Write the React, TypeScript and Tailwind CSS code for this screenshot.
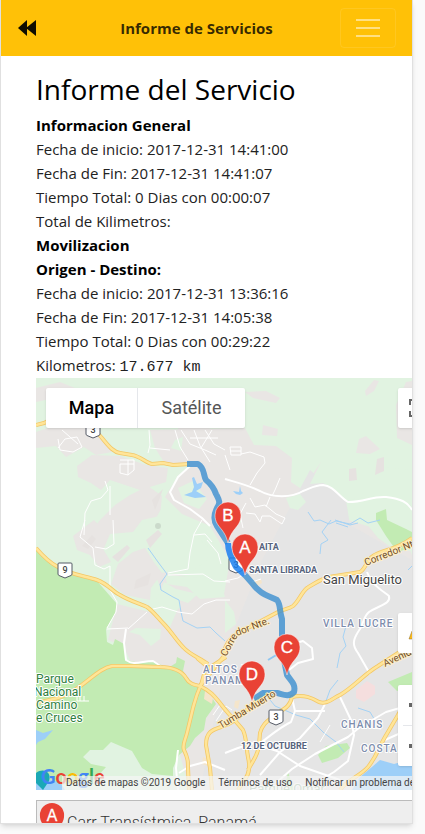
import React from "react";

const general = [
  "Fecha de inicio: 2017-12-31 14:41:00",
  "Fecha de Fin: 2017-12-31 14:41:07",
  "Tiempo Total: 0 Dias con 00:00:07",
  "Total de Kilimetros:",
];

const trip = [
  "Fecha de inicio: 2017-12-31 13:36:16",
  "Fecha de Fin: 2017-12-31 14:05:38",
  "Tiempo Total: 0 Dias con 00:29:22",
];

const stops = [
  { letter: "B", x: 228, y: 543 },
  { letter: "A", x: 245, y: 575 },
  { letter: "D", x: 252, y: 702 },
  { letter: "C", x: 287, y: 675 },
];

const pinShape =
  "M0 0C-1.500 -6 -3 -9 -6 -13C-10 -18 -13 -21 -13 -28A13 13 0 0 1 13 -28C13 -21 10 -18 6 -13C3 -9 1.500 -6 0 0Z";

const highways = [
  "M36 425L44 423L50 420L58 418",
  "M93 428L102 438C110 448 114 452 120 453L132 455C140 456 146 463 152 464L163 463L173 465L190 464",
  "M36 548C42 555 50 563 58 567C68 574 85 576 97 580C108 584 112 591 120 595C130 601 138 603 147 607C153 611 158 618 163 623C171 631 176 640 183 647C190 655 200 658 208 664",
  "M200 686L224 656C224 640 236 634 246 629L276 613C283 609 289 609 293 606C299 601 301 593 307 588C315 583 321 579 329 577L348 574L360 572C366 569 366 560 373 556C382 550 396 550 412 538",
  "M36 703C50 700 64 698 76 689C90 680 100 668 112 666L130 666L160 667C172 667 182 671 186 678C189 684 195 685 200 686",
  "M197 658L209 668L226 657",
  "M206 668C203 676 203 681 200 687C196 696 195 701 193 708L187 733C185 741 182 745 184 750C188 758 188 762 188 768L189 790",
  "M200 686C212 692 215 697 220 703C228 714 237 722 243 730C247 739 246 747 248 757C250 766 250 773 244 781L238 790",
  "M212 790L210 768L206 745C206 732 212 730 221 727C236 722 240 716 253 704L262 696",
  "M248 770C253 760 258 756 259 745L260 733C263 722 270 720 276 714C286 708 290 706 292 697C304 694 312 698 319 702C328 705 334 697 340 695C355 686 363 675 378 666L412 644",
  "M412 689L398 715L385 737C378 749 377 756 368 767C359 777 348 779 340 790",
];

const mainStreets = [
  "M225 479C235 482 248 485 260 491C272 498 292 498 303 491C313 487 316 485 323 485C334 486 338 496 348 502C365 502 372 496 386 497C401 499 408 502 412 510",
  "M190 466L178 477L170 492L174 500L190 509L202 518L210 526",
  "M367 572C371 584 380 589 389 596C391 604 380 605 369 612C362 618 365 623 358 632C353 640 352 645 358 653L370 674",
  "M126 629L124 643L126 660C134 666 142 661 153 661L162 667",
  "M292 698L295 711L291 722C280 727 270 736 258 745",
  "M325 704L318 718L300 738L280 752L260 775",
  "M295 711L325 711",
  "M340 697L351 720L354 735L348 761L334 772L324 778",
  "M400 708L386 712L374 719L360 727L348 737L315 754L292 769L276 783",
  "M262 746L277 751L300 766L340 780",
  "M225 753L238 748L254 743",
  "M179 773L190 766L205 762L225 770",
  "M178 750L176 768L178 790",
  "M385 740L412 728",
  "M289 645L303 641L312 648L313 659L298 663L289 670",
];

const lanes = [
  "M58 439L60 450L73 452L82 447L77 437L65 439L58 448M62 430L78 444",
  "M120 460L134 460L134 470L128 475L120 473L120 464L134 464M128 460V475",
  "M105 481L108 490L101 498L91 501L85 513L84 535M110 486L110 515",
  "M149 430L150 445L148 453M175 430L180 447L188 460M150 448L170 450",
  "M181 430L190 444L205 450L216 455M194 430L200 446L210 462M205 430L214 444L225 450M190 438L218 438M212 430L201 448",
  "M230 447L241 447L241 455L231 455ZM231 451L241 451M241 454L250 452L264 457L265 463L257 473L250 485M225 455L230 470M280 478L275 490L272 496",
  "M246 503L240 514L243 528M250 498L255 507L265 505L276 514L285 518L282 524L270 516L262 516L260 522L255 514L246 513M270 497L266 507",
  "M85 520L80 537L93 548L95 565L104 569L110 566L110 590L117 602L116 612L107 628M113 520L114 544L106 549L95 547",
  "M107 629L128 628M128 629L147 612M153 609L162 607L178 612L192 614L204 604L216 600L230 600",
  "M202 520L194 534L190 553L188 569L168 573M207 540L218 553L221 564M168 575L203 574L214 581L230 582M194 535L205 534L212 542",
  "M225 581L238 578L244 574M213 715L222 702M216 721L226 706L232 710",
  "M252 582L261 579M330 725L320 742M365 727L381 729",
  "M77 697V701H89M80 694V701M84 696V701",
];

const rivers = [
  "M148 548L158 562L167 574L160 584L161 590L173 597L179 600L181 612L183 621L197 628L210 627L216 633L225 641",
  "M331 520L322 532L328 540L321 544L320 554M335 520L350 525L358 523M336 523L348 527",
  "M308 512L314 521L320 520L329 524L336 521L350 524L360 518L368 523L380 520",
  "M346 626L343 637L346 646L340 653L337 668M262 690L275 706L296 715L310 719L324 733L336 742L344 752",
  "M338 680L330 690L326 701M408 570L412 566M358 708L370 712L376 722",
];

const hills = [
  "M36 388L60 382L75 388L90 400L70 409L50 399L36 402Z",
  "M36 432L48 428L60 424L95 428L104 440L112 452L96 455L84 447L66 457L56 446L36 448Z",
  "M77 466L92 455L120 456L146 465L168 468L166 482L140 490L110 480L101 490L91 483L78 477Z",
  "M115 505L130 495L148 486L162 496L160 516L142 520L133 532L110 534L104 548L88 536L100 520Z",
  "M150 430L245 428L254 445L276 446L292 458L291 482L303 490L310 478L321 462L320 484L345 501L348 520L380 530L408 545L412 555L412 790L190 790L178 748L212 710L195 684L150 661L132 664L123 646L108 640L117 604L150 612L170 627L180 604L163 594L155 574L167 572L188 577L214 580L224 594L230 560L210 526L182 514L165 497L178 476L190 466L164 462L155 448Z",
  "M118 564L133 552L145 548L153 561L162 573L151 588L150 600L125 595L111 584Z",
  "M73 536L94 520L108 535L103 549L111 562L99 567L90 555L77 550Z",
  "M245 392L266 391L280 398L276 403L253 398Z",
  "M263 425L278 429L277 436L262 435Z",
  "M365 391L374 380L379 381L374 391L366 396Z",
  "M359 439L366 436L380 449L370 454L356 453Z",
  "M396 405L406 382L412 381L412 445L397 438Z",
  "M177 420L195 412L210 424L208 444L194 455L180 442Z",
];

const groves = [
  "M129 632L136 628L161 629L160 639L151 646L140 635Z",
  "M164 582L176 589L198 594L188 603L179 600L181 608L170 610L155 601L160 592Z",
  "M183 550L197 538L207 545L208 560L192 571L184 568Z",
  "M175 440L183 437L181 451L171 448Z",
  "M178 488L193 481L207 499L199 509L184 503Z",
  "M165 575L220 579L225 597L200 599L187 587L167 584Z",
  "M155 558L183 546L187 569L169 575Z",
  "M225 510L237 506L241 522L229 529Z",
  "M225 600L234 612L236 624L225 633Z",
  "M155 520L166 500L182 516L206 528L196 536L186 552L166 560L150 548Z",
  "M286 498L300 494L306 502L298 510L290 508Z",
];

function MapDrawing() {
  return (
    <svg
      className="block h-full w-full"
      viewBox="36 378 376 412"
      preserveAspectRatio="xMinYMin slice"
      role="img"
      aria-label="Mapa de la ruta"
      fontFamily="Roboto, sans-serif"
    >
      <rect x="36" y="378" width="1200" height="412" fill="#e1f3e1" />
      <g fill="#e9e6e4">
        {hills.map((d) => (
          <path key={d} d={d} />
        ))}
      </g>
      <path d="M310 470L346 500L350 525L412 560V790H200L230 640L262 560Z" fill="#e5e5e5" />
      <path d="M348 503L375 497L398 500L412 512V551L395 550L378 538L366 523L350 519Z" fill="#e1f3e1" />
      <path d="M321 462L345 462L412 470V506L386 494L348 500L336 490L323 483L310 484Z" fill="#e1f3e1" />
      <g fill="#e1f3e1">
        {groves.map((d) => (
          <path key={d} d={d} />
        ))}
      </g>
      <g fill="#e6e2e0">
        <path d="M377 459L384 457L384 471L375 475Z" />
        <path d="M349 469L356 468L357 480L349 481Z" />
        <path d="M152 500L163 489L159 500L155 510Z" />
        <path d="M112 557L127 545L130 548L118 562Z" />
        <path d="M136 580L151 573L148 585L134 589Z" />
        <path d="M82 546L92 535L96 539L88 549Z" />
        <path d="M146 540L158 530L162 534L150 548Z" />
      </g>
      <g fill="#c2ebb3">
        <path d="M36 550L58 568L97 581L117 604L115 614L106 629L107 642L113 645L115 639L124 644L126 660L140 663L153 661L168 668L176 663L177 657L185 661L183 671L192 684L206 688L216 704L206 718L204 730L195 738L190 746L179 755L173 768L173 776L152 774L142 768L132 751L111 742L103 750L90 750L83 757L91 764L106 767L95 779L60 785L36 776Z" />
        <path d="M376 520L376 513L386 509L387 520L406 529L412 532V545L398 553L386 536Z" />
        <path d="M318 755L326 746L347 743L350 748L338 758L322 763Z" />
        <path d="M388 682L412 672V687L397 691Z" />
        <path d="M284 790L288 772L294 790Z" />
      </g>
      <path d="M356 690L367 681L375 686L375 694L364 702L356 698Z" fill="#f5dede" />
      <g fill="#f4e5cb">
        <path d="M205 691L214 692L212 704L204 699Z" />
        <path d="M235 701L240 700L238 709L234 707Z" />
        <path d="M203 757L209 759L208 766L202 764Z" />
        <path d="M250 582L261 579L262 583L254 588Z" />
      </g>
      <g fill="#9dcff8">
        <path d="M192 478L194 477L197 484L203 482L201 488L196 491L206 497L195 498L184 495L192 492L194 487Z" />
        <path d="M233 491L239 492L240 486L241 491L243 493L240 495L236 494Z" />
        <path d="M36 730L43 733L53 730L45 739L38 742L36 745Z" />
        <path d="M352 790L360 777L372 767L380 760L394 764L412 759V790Z" />
        <path d="M36 777L60 782L65 790H36Z" />
      </g>
      <circle cx="158" cy="526" r="3" fill="#cbdacb" />
      <g fill="none" stroke="#a4d2f5" strokeWidth="1">
        {rivers.map((d) => (
          <path key={d} d={d} />
        ))}
      </g>
      <path d="M268 660L278 654" stroke="#8fc6f0" strokeWidth="2" />
      <g fill="none" stroke="#ffffff" strokeLinejoin="round">
        <g strokeWidth="1">
          {lanes.map((d) => (
            <path key={d} d={d} />
          ))}
        </g>
        <g strokeWidth="2">
          {mainStreets.map((d) => (
            <path key={d} d={d} />
          ))}
        </g>
      </g>
      <g fill="none" stroke="#f3c766" strokeWidth="4">
        {highways.map((d) => (
          <path key={d} d={d} />
        ))}
      </g>
      <g fill="none" stroke="#ffe598" strokeWidth="2.500">
        {highways.map((d) => (
          <path key={d} d={d} />
        ))}
      </g>

      <RoadShield x={93} y={430} label="3" />
      <RoadShield x={65} y={570} label="9" />
      <RoadShield x={236} y={565} label="3" />
      <RoadShield x={276} y={717} label="3" />

      <g fill="none" strokeLinejoin="round" strokeWidth="6">
        <path
          d="M187 464L198 464C205 468 203 475 206 480C211 484 214 488 216 494C219 500 221 502 217 508C214 514 213 520 217 526L228 543"
          stroke="#3b8fd0"
          strokeOpacity="0.8"
        />
        <path d="M228 543C228 552 232 559 236 567L245 575" stroke="#1a80f0" strokeOpacity="0.85" />
        <path
          d="M245 575L252 583C260 594 267 595 277 600C281 605 279 610 282 619L282 635L284 660L287 675C291 681 296 684 294 692C289 698 282 694 277 693L263 693L254 699"
          stroke="#3b8fd0"
          strokeOpacity="0.8"
        />
      </g>

      <g stroke="#ffffff" strokeWidth="2" strokeLinejoin="round" paintOrder="stroke">
        <g fill="#56637c" fontSize="9" fontWeight="700">
          <text x="259" y="550">AITA</text>
          <text x="249" y="573">SANTA LIBRADA</text>
          <text x="241" y="749">12 DE OCTUBRE</text>
        </g>
        <g fill="#7c8cac" fontSize="10" fontWeight="500" letterSpacing="1">
          <text x="323" y="627">VILLA LUCRE</text>
          <text x="203" y="673">ALTOS DE</text>
          <text x="205" y="684">PANAMÁ</text>
          <text x="341" y="728">CHANIS</text>
          <text x="361" y="752">COSTA</text>
        </g>
        <text x="323" y="584" fill="#454545" fontSize="13">San Miguelito</text>
        <g fill="#2f8040" fontSize="12">
          <text x="36" y="683">Parque</text>
          <text x="34" y="696">Nacional</text>
          <text x="36" y="709">Camino</text>
          <text x="36" y="722">e Cruces</text>
        </g>
        <text x="249" y="793" fill="#91b391" fontSize="13">Parque Omar</text>
        <g fill="#74502a" fontSize="10" stroke="#ffefc2">
          <text transform="translate(226 657) rotate(-61)">Corre</text>
          <text transform="translate(237 636) rotate(-21)">dor Nte.</text>
          <text transform="translate(366 566) rotate(-22)">Corredor Nte.</text>
          <text transform="translate(385 667) rotate(-25)">Avenida</text>
          <text transform="translate(221 729) rotate(-31)">Tumba</text>
          <text transform="translate(249 712) rotate(-31)">Muerto</text>
        </g>
      </g>

      {stops.map((stop) => (
        <g key={stop.letter} transform={`translate(${stop.x} ${stop.y})`}>
          <path d={pinShape} fill="#e94235" stroke="#ffffff" strokeWidth="0.500" />
          <PinLetter letter={stop.letter} />
        </g>
      ))}

      <path d="M36 773C44 767 52 773 49 781L43 790L36 783Z" fill="#1ba8b5" />
    </svg>
  );
}

function PinLetter({ letter }: { letter: string }) {
  return (
    <text
      y="-22"
      textAnchor="middle"
      fill="#ffffff"
      fontFamily="Liberation Sans, sans-serif"
      fontSize="17"
      stroke="#ffffff"
      strokeWidth="0.300"
    >
      {letter}
    </text>
  );
}

function RoadShield({ x, y, label }: { x: number; y: number; label: string }) {
  return (
    <g transform={`translate(${x} ${y})`}>
      <path
        d="M-6 -7H6Q7 -7 7 -6V4Q7 5 6 5.500L0 8L-6 5.500Q-7 5 -7 4V-6Q-7 -7 -6 -7Z"
        fill="#ffffff"
        stroke="#555b66"
      />
      <text y="3" textAnchor="middle" fontSize="9" fontWeight="500" fill="#444444">
        {label}
      </text>
    </g>
  );
}

function GoogleLogo() {
  return (
    <span
      aria-label="Google"
      className="absolute bottom-0 left-[5px] font-['Lato',sans-serif] text-[20px] leading-7 font-bold"
    >
      <span className="text-[#4285f4]">G</span>
      <span className="text-[#ea4335]">o</span>
      <span className="text-[#fbbc05]">o</span>
      <span className="text-[#4285f4]">g</span>
      <span className="text-[#34a853]">l</span>
      <span className="text-[#ea4335]">e</span>
    </span>
  );
}

function RouteMap() {
  return (
    <div className="relative h-[412px] overflow-hidden font-['Roboto',sans-serif]">
      <MapDrawing />
      <div className="absolute top-[10px] left-[10px] flex h-10 rounded-xs bg-white text-[18px] shadow">
        <button type="button" className="w-[92px] border-r border-gray-200 font-medium text-black">
          Mapa
        </button>
        <button type="button" className="w-[107px] text-[#565656]">
          Satélite
        </button>
      </div>
      <button
        type="button"
        aria-label="Pantalla completa"
        className="absolute top-[10px] left-[362px] flex size-10 items-center justify-center rounded-xs bg-white shadow"
      >
        <svg className="size-[18px]" viewBox="0 0 18 18" fill="none" stroke="#666666" strokeWidth="2">
          <path d="M1 6V1H6M12 1H17V6M17 12V17H12M6 17H1V12" />
        </svg>
      </button>
      <button
        type="button"
        aria-label="Street View"
        className="absolute top-[235px] left-[362px] flex size-10 items-center justify-center rounded-xs bg-white shadow"
      >
        <svg className="h-6 w-5" viewBox="0 0 20 24">
          <circle cx="10" cy="5" r="4" fill="#fbb917" />
          <path d="M4 10H16L18 18H13V24H7V18H1Z" fill="#fbb917" stroke="#8a6d2b" strokeWidth="0.500" />
        </svg>
      </button>
      <div className="absolute top-[307px] left-[362px] flex w-10 flex-col rounded-xs bg-white shadow">
        <button type="button" aria-label="Acercar" className="flex h-10 items-center justify-center">
          <svg className="size-[18px]" viewBox="0 0 18 18" stroke="#666666" strokeWidth="4">
            <path d="M0 9H18M9 0V18" />
          </svg>
        </button>
        <span className="mx-[5px] h-px bg-gray-200" />
        <button type="button" aria-label="Alejar" className="flex h-10 items-center justify-center">
          <svg className="size-[18px]" viewBox="0 0 18 18" stroke="#666666" strokeWidth="4">
            <path d="M0 9H18" />
          </svg>
        </button>
      </div>
      <GoogleLogo />
      <div className="absolute right-0 bottom-0 left-[26px] flex h-[14px] gap-[13px] overflow-hidden bg-[#f5f5f5]/70 pl-1 text-[10px] leading-[14px] whitespace-nowrap text-[#444444]">
        <span>Datos de mapas ©2019 Google</span>
        <a href="#terminos">Términos de uso</a>
        <a href="#notificar">Notificar un problema de Maps</a>
      </div>
    </div>
  );
}

export default function App() {
  return (
    <div className="h-screen bg-[#fafafa] pr-3 pb-[10px] font-['Open_Sans','Noto_Sans',sans-serif]">
      <div className="h-full overflow-hidden border-x border-b border-[#e0e0e0] bg-white text-black shadow-md">
        <nav className="flex h-14 items-center justify-between bg-[#ffc107] px-4">
          <button type="button" aria-label="Volver" className="flex h-10 w-9 items-center">
            <svg className="h-[18px] w-5" viewBox="0 0 20 18" fill="#100d00">
              <path d="M1 9L10 1V17ZM9 9L19 1V17Z" />
            </svg>
          </button>
          <span className="text-[15px] font-bold text-black/80">Informe de Servicios</span>
          <button
            type="button"
            aria-label="Menú"
            className="flex h-10 w-14 items-center justify-center rounded border border-white/10"
          >
            <svg className="size-[30px]" viewBox="0 0 30 30" stroke="#ffffff" strokeOpacity="0.5" strokeWidth="2">
              <path d="M3 7H27M3 15H27M3 23H27" />
            </svg>
          </button>
        </nav>
        <main className="pt-4 pl-[35px] text-[15px] leading-6">
          <h2 className="mb-[7px] text-[28px] leading-[34px] font-normal">Informe del Servicio</h2>
          <h3 className="font-bold">Informacion General</h3>
          {general.map((line) => (
            <p key={line} className="text-[#222222]">{line}</p>
          ))}
          <h3 className="font-bold">Movilizacion</h3>
          <h3 className="font-bold">Origen - Destino:</h3>
          {trip.map((line) => (
            <p key={line} className="text-[#222222]">{line}</p>
          ))}
          <p className="mb-px flex h-6 items-baseline text-[#222222]">
            <span className="whitespace-pre">Kilometros: </span>
            <span className="font-['Liberation_Mono',monospace]">17.677 km</span>
          </p>
          <RouteMap />
          <div className="mt-[10px] flex border border-r-0 border-[#bbbbbb] bg-[#eeeeee] font-['Roboto',sans-serif] text-[16px] font-light text-[#333333]">
            <svg className="mt-px ml-px h-[40px] w-[28px]" viewBox="-14 -42 28 43">
              <path d={pinShape} fill="#e94235" />
              <PinLetter letter="A" />
            </svg>
            <span className="pt-[10px] pl-px">Carr Transístmica, Panamá</span>
          </div>
        </main>
      </div>
    </div>
  );
}
